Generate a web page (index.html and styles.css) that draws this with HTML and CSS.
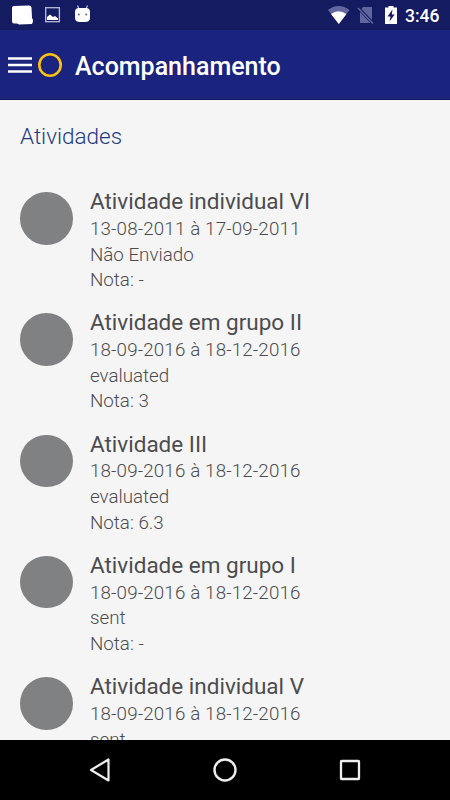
FILE: index.html
```html
<!DOCTYPE html>
<html lang="pt-BR">
<head>
  <meta charset="utf-8">
  <title>Acompanhamento</title>
  <link rel="stylesheet" href="styles.css">
</head>
<body>
  <div class="status-bar">
    <svg class="status-icons" width="100" height="30" viewBox="0 0 100 30">
      <path d="M14 6L29 5.500Q31 5.500 31.500 7.500L32 18Q34 20 32 24L19 24.500L17 23.500H14Q12 23.500 12 21V8Q12 6 14 6Z" fill="#fff"/>
      <rect x="45.700" y="7.700" width="13.700" height="14" fill="none" stroke="#b9bcdb" stroke-width="1.300"/>
      <path d="M47 20V17L50 14.500L53 17L55 16L58 18.500V20Z" fill="#fff"/>
      <path d="M77.500 5.500L79 9M87.500 5.500L86 9" stroke="#b9bcdb" stroke-width="1.200"/>
      <path d="M75 12Q75 8 79 8H86Q90 8 90 12V18Q90 22 85 22H80Q75 22 75 18Z" fill="#fff"/>
      <circle cx="78.800" cy="14.500" r="1.100" fill="#686ca5"/>
      <circle cx="86.200" cy="14.500" r="1.100" fill="#686ca5"/>
    </svg>
    <svg class="status-icons" width="75" height="30" viewBox="325 0 75 30">
      <path d="M328 10Q338.500 2 349.500 10L338.800 24Z" fill="#62669f"/>
      <path d="M331 14Q338.500 8.500 346.500 14L338.800 24Z" fill="#fff"/>
      <path d="M363 7H372V20L361.500 9ZM360 12L370.500 23H360Z" fill="#62669f"/>
      <path d="M358 8L373 23.500" stroke="#62669f" stroke-width="1.500"/>
      <path d="M386 7.500H388.500V6H393.500V7.500H397V24H385V7.500Z" fill="#fff"/>
      <path d="M392.500 9.500L387.500 16.500H390.500L389.500 21.500L394.700 14.500H391.800Z" fill="#151b60"/>
    </svg>
    <span class="clock">3:46</span>
  </div>

  <div class="app-bar">
    <svg class="menu-icon" width="24" height="18" viewBox="0 0 24 18">
      <path d="M0 2.500H24M0 9H24M0 15.500H24" stroke="#fff" stroke-width="2.400"/>
    </svg>
    <svg class="logo" width="24" height="24" viewBox="0 0 24 24">
      <circle cx="12" cy="12" r="10.700" fill="none" stroke="#fdc20f" stroke-width="2.600"/>
    </svg>
    <h1>Acompanhamento</h1>
  </div>

  <div class="content">
    <h2>Atividades</h2>
    <div class="item">
      <div class="avatar"></div>
      <div class="info">
        <h3>Atividade individual VI</h3>
        <p class="date">13-08-2011 à 17-09-2011</p>
        <p>Não Enviado</p>
        <p>Nota: -</p>
      </div>
    </div>
    <div class="item">
      <div class="avatar"></div>
      <div class="info">
        <h3>Atividade em grupo II</h3>
        <p class="date">18-09-2016 à 18-12-2016</p>
        <p>evaluated</p>
        <p>Nota: 3</p>
      </div>
    </div>
    <div class="item">
      <div class="avatar"></div>
      <div class="info">
        <h3>Atividade III</h3>
        <p class="date">18-09-2016 à 18-12-2016</p>
        <p>evaluated</p>
        <p>Nota: 6.3</p>
      </div>
    </div>
    <div class="item">
      <div class="avatar"></div>
      <div class="info">
        <h3>Atividade em grupo I</h3>
        <p class="date">18-09-2016 à 18-12-2016</p>
        <p>sent</p>
        <p>Nota: -</p>
      </div>
    </div>
    <div class="item">
      <div class="avatar"></div>
      <div class="info">
        <h3>Atividade individual V</h3>
        <p class="date">18-09-2016 à 18-12-2016</p>
        <p>sent</p>
      </div>
    </div>
  </div>

  <div class="nav-bar">
    <svg width="24" height="26" viewBox="0 0 24 26">
      <path d="M3 13L20.500 2.500V23.500Z" fill="none" stroke="#eee" stroke-width="2.200" stroke-linejoin="round"/>
    </svg>
    <svg width="24" height="26" viewBox="0 0 24 26">
      <circle cx="12" cy="13" r="10.500" fill="none" stroke="#eee" stroke-width="2.400"/>
    </svg>
    <svg width="24" height="26" viewBox="0 0 24 26">
      <rect x="3" y="4" width="18" height="18" rx="0.500" fill="none" stroke="#eee" stroke-width="2.300"/>
    </svg>
  </div>
</body>
</html>
```

FILE: styles.css
```css
body {
  margin: 0;
  height: 800px;
  display: flex;
  flex-direction: column;
  overflow: hidden;
  font-family: Roboto, sans-serif;
  background-color: #f5f5f5;
}
h1, h2, h3, p {
  margin: 0;
}
.status-bar {
  display: flex;
  flex: none;
  height: 30px;
  justify-content: space-between;
  background-color: #151b60;
}
.status-icons + .status-icons {
  margin-left: auto;
}
.clock {
  width: 45px;
  padding-left: 5px;
  color: #fff;
  font-size: 17.5px;
  font-weight: 500;
  line-height: 32px;
}
.app-bar {
  display: flex;
  flex: none;
  box-sizing: border-box;
  height: 70px;
  align-items: center;
  padding-left: 8px;
  border-bottom: 1px solid #10175c;
  background-color: #1a237e;
}
.logo {
  margin-left: 6px;
}
.app-bar h1 {
  margin: 3px 0 0 13px;
  color: #fff;
  font-size: 25px;
  font-weight: 500;
}
.content {
  flex: 1;
  min-height: 0;
  overflow: hidden;
  padding: 21px 20px 0;
}
.content h2 {
  height: 66px;
  color: #1f3a82;
  font-size: 22.5px;
  font-weight: 300;
  line-height: 30px;
}
.item {
  display: flex;
  height: 121.25px;
}
.avatar {
  width: 52.5px;
  height: 52.5px;
  margin: 5px 17.5px 0 0;
  border-radius: 50%;
  background-color: #808183;
}
.info h3 {
  margin-bottom: 1px;
  color: #4c4c4e;
  font-size: 22.5px;
  font-weight: 400;
  line-height: 28.8px;
}
.info p {
  color: #4c4c4e;
  font-size: 18.75px;
  font-weight: 300;
  line-height: 25.7px;
}
.info .date {
  letter-spacing: 0.15px;
}
.nav-bar {
  display: flex;
  flex: none;
  height: 60px;
  align-items: center;
  justify-content: center;
  gap: 101px;
  background-color: #000;
}
```
